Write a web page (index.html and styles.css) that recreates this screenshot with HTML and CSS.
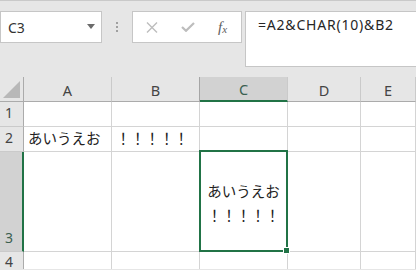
FILE: index.html
```html
<!DOCTYPE html>
<html lang="ja">
<head>
    <meta charset="UTF-8">
    <title>CHAR(10)</title>
    <link rel="stylesheet" href="styles.css">
</head>
<body>
    <div class="app">
        <!-- formula bar -->
        <div class="formula-bar">
            <div class="name-box">
                <span>C3</span>
                <svg class="drop" width="8" height="5" viewBox="0 0 8 5"><path d="M0 0H8L4 5Z" fill="#6b6b6b"/></svg>
            </div>
            <div class="grip"><i></i><i></i><i></i></div>
            <div class="fx-box">
                <svg width="12" height="11" viewBox="0 0 12 11"><path d="M1 0.5L11 10.5M11 0.5L1 10.5" stroke="#bdbdbd" stroke-width="1.4" fill="none"/></svg>
                <svg width="14" height="10" viewBox="0 0 14 10"><path d="M1 5L5 8.8L13 1" stroke="#bdbdbd" stroke-width="2.2" fill="none"/></svg>
                <span class="fx">f<sub>x</sub></span>
            </div>
            <div class="formula-input">=A2&amp;CHAR(10)&amp;B2</div>
        </div>

        <!-- sheet -->
        <div class="sheet">
            <div class="corner"><div class="tri"></div></div>
            <div class="col-head">A</div>
            <div class="col-head">B</div>
            <div class="col-head active">C</div>
            <div class="col-head">D</div>
            <div class="col-head">E</div>

            <div class="row-head">1</div>
            <div class="cell"></div>
            <div class="cell"></div>
            <div class="cell"></div>
            <div class="cell"></div>
            <div class="cell"></div>

            <div class="row-head">2</div>
            <div class="cell">あいうえお</div>
            <div class="cell">！！！！！</div>
            <div class="cell"></div>
            <div class="cell"></div>
            <div class="cell"></div>

            <div class="row-head active">3</div>
            <div class="cell"></div>
            <div class="cell"></div>
            <div class="cell wrap selected">あいうえお<br>！！！！！<div class="sel"><div class="handle"></div></div></div>
            <div class="cell"></div>
            <div class="cell"></div>

            <div class="row-head">4</div>
            <div class="cell"></div>
            <div class="cell"></div>
            <div class="cell"></div>
            <div class="cell"></div>
            <div class="cell"></div>
        </div>
    </div>
</body>
</html>
```

FILE: styles.css
```css
body {
    margin: 0;
    background-color: #e6e6e6;
    font-family: "Noto Sans", "Noto Sans CJK JP", sans-serif;
    color: #262626;
    overflow: hidden;
}
.app {
    border-top: 1px solid #c9c9c9;
    padding-top: 10px;
    height: 269px;
    box-sizing: border-box;
}

/* formula bar */
.formula-bar {
    display: flex;
    align-items: flex-start;
}
.name-box {
    width: 102px;
    height: 32px;
    box-sizing: border-box;
    background: white;
    border: 1px solid #c6c6c6;
    display: flex;
    align-items: center;
    justify-content: space-between;
    padding: 0 6px 0 7px;
    font-size: 14px;
    color: #333;
}
.name-box .drop {
    margin-top: -2px;
}
.grip {
    width: 30px;
    height: 32px;
    display: flex;
    flex-direction: column;
    align-items: center;
    justify-content: center;
    gap: 2px;
}
.grip i {
    width: 2px;
    height: 2px;
    background: #a0a0a0;
}
.fx-box {
    width: 110px;
    height: 32px;
    box-sizing: border-box;
    background: white;
    border: 1px solid #c6c6c6;
    display: flex;
    align-items: center;
    padding: 0 12px 0 13px;
    gap: 23px;
}
.fx {
    font-family: "Liberation Serif", serif;
    font-style: italic;
    font-size: 15px;
    color: #5e5e5e;
    line-height: 1;
}
.fx sub {
    font-size: 11px;
    vertical-align: -1px;
}
.formula-input {
    flex: 1;
    margin-left: 3px;
    margin-right: -4px;
    height: 56px;
    box-sizing: border-box;
    background: white;
    border: 1px solid #c6c6c6;
    padding: 3px 0 0 12px;
    font-size: 14px;
    letter-spacing: 0.8px;
    line-height: 20px;
}

/* sheet grid */
.sheet {
    margin-top: 10px;
    display: grid;
    grid-template-columns: 24px 88px 88px 88px 73px 1fr;
    grid-template-rows: 25px 25px 25px 100px 1fr;
    height: 193px;
}
.corner {
    border-right: 1px solid #ababab;
    border-bottom: 1px solid #ababab;
    position: relative;
}
.tri {
    position: absolute;
    right: 3px;
    bottom: 3px;
    width: 17px;
    height: 17px;
    background: #b8b8b8;
    clip-path: polygon(100% 0, 100% 100%, 0 100%);
}
.col-head {
    border-right: 1px solid #cacaca;
    border-bottom: 1px solid #ababab;
    display: flex;
    align-items: center;
    justify-content: center;
    font-size: 14.5px;
    color: #444;
    padding-top: 1px;
}
.col-head.active {
    background: #d2d2d2;
    border-bottom: 2px solid #217346;
    box-shadow: -1px 0 0 #a5a5a5;
    color: #3b5f50;
}
.row-head {
    border-right: 1px solid #ababab;
    border-bottom: 1px solid #cacaca;
    display: flex;
    align-items: flex-end;
    padding: 0 0 3px 5px;
    font-size: 14px;
    color: #444;
    line-height: 20px;
}
.row-head.active {
    background: #d2d2d2;
    border-right: 2px solid #217346;
    color: #3b5f50;
}
.cell {
    background: white;
    border-right: 1px solid #d4d4d4;
    border-bottom: 1px solid #d4d4d4;
    display: flex;
    align-items: flex-end;
    padding: 0 0 3px 4px;
    font-family: "Noto Sans CJK JP", sans-serif;
    font-size: 14.5px;
    line-height: 20px;
    white-space: nowrap;
    color: #222;
}
.cell.wrap {
    display: block;
    padding: 27px 0 0 0;
    text-align: center;
    line-height: 24px;
}
.selected {
    position: relative;
}
.sel {
    position: absolute;
    left: -1px;
    right: -1px;
    top: -2px;
    bottom: -1px;
    border: 2px solid #217346;
}
.handle {
    position: absolute;
    right: -4px;
    bottom: -4px;
    width: 5px;
    height: 5px;
    background: #217346;
    border: 1px solid white;
}
```
